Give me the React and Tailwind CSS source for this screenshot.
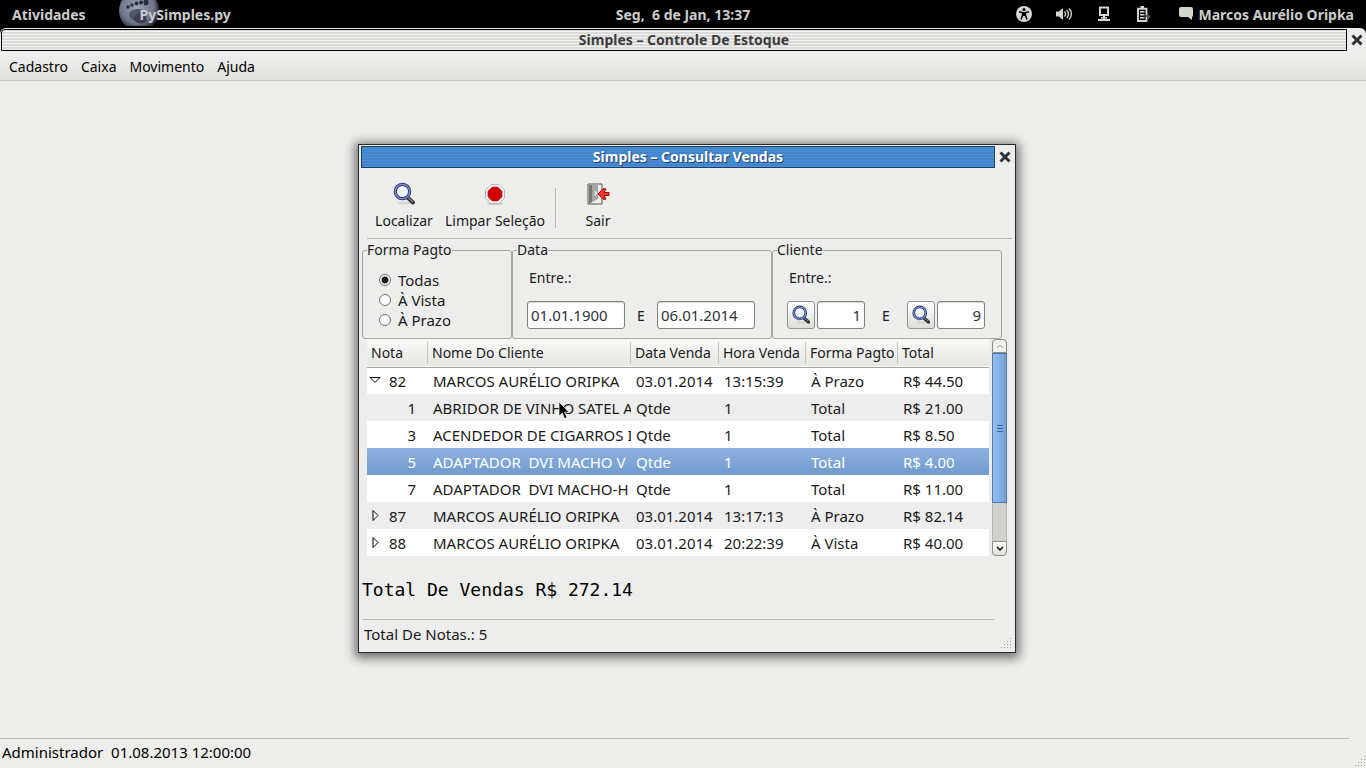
import { useState } from 'react';

const menus = ['Cadastro', 'Caixa', 'Movimento', 'Ajuda'];

const formas = ['Todas', 'À Vista', 'À Prazo'];

const rows = [
    { nota: '82', open: true, cells: ['MARCOS AURÉLIO ORIPKA', '03.01.2014', '13:15:39', 'À Prazo', 'R$ 44.50'] },
    { nota: '1', child: true, cells: ['ABRIDOR DE VINHO SATEL A', 'Qtde', '1', 'Total', 'R$ 21.00'] },
    { nota: '3', child: true, cells: ['ACENDEDOR DE CIGARROS I', 'Qtde', '1', 'Total', 'R$ 8.50'] },
    { nota: '5', child: true, cells: ['ADAPTADOR  DVI MACHO V', 'Qtde', '1', 'Total', 'R$ 4.00'] },
    { nota: '7', child: true, cells: ['ADAPTADOR  DVI MACHO-H', 'Qtde', '1', 'Total', 'R$ 11.00'] },
    { nota: '87', cells: ['MARCOS AURÉLIO ORIPKA', '03.01.2014', '13:17:13', 'À Prazo', 'R$ 82.14'] },
    { nota: '88', cells: ['MARCOS AURÉLIO ORIPKA', '03.01.2014', '20:22:39', 'À Vista', 'R$ 40.00'] },
];

const headers = ['Nota', 'Nome Do Cliente', 'Data Venda', 'Hora Venda', 'Forma Pagto', 'Total'];

const SearchIcon = ({ className }) => (
    <svg viewBox="0 0 24 24" className={className} aria-hidden="true">
        <ellipse cx="13" cy="21" rx="8" ry="1.500" fill="#d6d6d3" />
        <path d="M15.500 15.500l5.500 5" stroke="#2e3436" strokeWidth="4" strokeLinecap="round" />
        <path d="M16 15.500l4.500 4" stroke="#888a85" strokeWidth="1.200" strokeLinecap="round" />
        <circle cx="10.500" cy="9.500" r="7.200" fill="#eef2f8" stroke="#27397a" strokeWidth="3.200" />
        <circle cx="10.500" cy="9.500" r="7.200" fill="none" stroke="#7d93cf" strokeWidth="1.300" />
        <path d="M6 9a4.500 4.500 0 0 1 5-4.500c-1 2.500-2.500 4-5 4.500z" fill="#fff" />
    </svg>
);

const StopIcon = () => (
    <svg viewBox="0 0 24 24" className="size-6" aria-hidden="true">
        <ellipse cx="12" cy="21.500" rx="8" ry="1.500" fill="#c4c4c0" />
        <path d="M8 2.500h8l5.500 5.500v8L16 21.500H8L2.500 16V8z" fill="#fafafa" stroke="#b5b7b2" />
        <path d="M9.200 5.200h5.600l4 4v5.600l-4 4H9.200l-4-4V9.200z" fill="#d40000" stroke="#b00000" />
    </svg>
);

const ExitIcon = () => (
    <svg viewBox="0 0 24 24" className="size-6" aria-hidden="true">
        <path d="M2 2h14v20H2z" fill="#eeeeec" stroke="#555753" />
        <path d="M3 3h9v14l-9 5z" fill="#a3a5a1" />
        <path d="M3 3h3v17l-3 2z" fill="#747672" />
        <path d="M8.500 9l2 2.500-2 2" fill="none" stroke="#eeeeec" strokeWidth="1.300" />
        <path d="M23 10.500h-5l2-3.500-2.500-.5-5.500 5.500 5.500 5.500 2.500-.5-2-3.500h5z" fill="#ef3a29" stroke="#a40000" />
    </svg>
);

const CloseIcon = () => (
    <svg viewBox="0 0 12 12" className="size-3" aria-hidden="true">
        <path d="M1.500 1.500l9 9M10.500 1.500l-9 9" stroke="#2e3436" strokeWidth="3" />
    </svg>
);

const Grip = () => (
    <svg viewBox="0 0 12 12" className="size-3" fill="#a3a3a0" aria-hidden="true">
        <path d="M10 0h1v1h-1zM10 3h1v1h-1zM7 3h1v1H7zM10 6h1v1h-1zM7 6h1v1H7zM4 6h1v1H4zM10 9h1v1h-1zM7 9h1v1H7zM4 9h1v1H4zM1 9h1v1H1z" />
    </svg>
);

const Foot = () => (
    <svg viewBox="0 0 44 26" className="h-[26px] w-11" aria-hidden="true">
        <defs>
            <radialGradient id="ball" cx="45%" cy="40%" r="60%">
                <stop offset="0" stopColor="#9da3b8" />
                <stop offset="0.700" stopColor="#6c7288" />
                <stop offset="1" stopColor="#1c1e26" />
            </radialGradient>
        </defs>
        <circle cx="23" cy="11" r="20" fill="url(#ball)" />
        <ellipse cx="22" cy="15" rx="9" ry="6" fill="#505568" />
        <path d="M17 19c1-4 7-7 12-5l2 7c-4 4-10 3-14-2z" fill="#3c404f" />
        <g fill="#2b2e39">
            <circle cx="12" cy="7" r="1.800" />
            <circle cx="16" cy="5" r="1.800" />
            <circle cx="20.500" cy="3.500" r="1.900" />
            <circle cx="25" cy="2.500" r="2" />
            <ellipse cx="30" cy="2.500" rx="2.500" ry="3" />
        </g>
    </svg>
);

const TrayIcons = () => (
    <div className="flex items-center gap-6 pb-px text-[#d3d7cf]">
        <svg viewBox="0 0 16 16" className="size-4" aria-label="Acessibilidade">
            <circle cx="8" cy="8" r="8" fill="currentColor" />
            <circle cx="8" cy="3.500" r="1.500" fill="#000" />
            <path d="M3 5.800l3.500.8v3L5 13.500M13 5.800l-3.500.8v3L11 13.500" fill="none" stroke="#000" strokeWidth="1.500" />
            <path d="M6.300 6h3.400v4H6.300z" fill="#000" />
        </svg>
        <svg viewBox="0 0 16 16" className="size-4" aria-label="Volume">
            <path d="M0 5.500h3L7 2v12l-4-3.500H0z" fill="currentColor" />
            <path d="M8.500 5.500c1.300 1.500 1.300 3.500 0 5M10.700 4c2.200 2.500 2.200 5.500 0 8M13 2.500c3 3.500 3 7.500 0 11" fill="none" stroke="currentColor" strokeWidth="1.300" />
        </svg>
        <svg viewBox="0 0 16 16" className="size-4" aria-label="Rede">
            <path d="M4 1.500h8v7.500H4z" fill="none" stroke="currentColor" strokeWidth="2" />
            <path d="M7 9h2v4H7zM5 11h6v1.500H5zM2 13h12v2H2z" fill="currentColor" />
        </svg>
        <svg viewBox="0 0 16 16" className="size-4" aria-label="Bateria">
            <path d="M2 2.800h8.500V15H2zM4.500 1h3.500" fill="none" stroke="currentColor" strokeWidth="1.900" />
            <path d="M4 5h4.500v1.500H4zM4 8h4.500v1.500H4zM4 11h4.500v1.500H4z" fill="currentColor" />
            <path d="M12.500 6l-3.500 5h2.500l-1 4.500 4.500-6H12.500z" fill="#55575a" />
        </svg>
    </div>
);

const Field = ({ label, className, ...props }) => (
    <input
        type="text"
        aria-label={label}
        className={`h-7 rounded-[3px] border border-[#80827d] bg-white px-[3px] text-[15px] text-[#2e3436] shadow-[inset_0_1px_1px_#d5d5d2] outline-none ${className}`}
        {...props}
    />
);

const LookupButton = ({ label }) => (
    <button
        type="button"
        aria-label={label}
        className="flex size-7 items-center justify-center rounded-[3px] border border-[#90928d] bg-linear-to-b from-white to-[#dededb]"
    >
        <SearchIcon className="size-5" />
    </button>
);

const Group = ({ title, className, children }) => (
    <fieldset className={`h-[98px] rounded-[3px] border border-[#a6a6a2] ${className}`}>
        <legend className="ml-1 h-[18px] leading-[18px]">{title}</legend>
        {children}
    </fieldset>
);

const ToolButton = ({ label, className, children }) => (
    <button type="button" className={`flex flex-col items-center gap-[5px] ${className}`}>
        {children}
        <span className="leading-5">{label}</span>
    </button>
);

const Expander = ({ open }) => (
    <svg viewBox="0 0 12 12" className="size-3" aria-hidden="true">
        <path d={open ? 'M1 2.500h10L6 7.500z' : 'M4 .5v10l5-5z'} fill="#fff" stroke="#000" />
    </svg>
);

const Filters = () => {
    const [forma, setForma] = useState('Todas');

    return (
        <div className="flex pr-[13px] pl-[3px]">
            <Group title="Forma Pagto" className="w-[150px]">
                <div className="flex flex-col pt-[11px] pl-4 text-[15px]">
                    {formas.map((f) => (
                        <label key={f} className="flex h-5 items-center gap-[7px]">
                            <input
                                type="radio"
                                name="forma"
                                checked={forma === f}
                                onChange={() => setForma(f)}
                                className="size-3 appearance-none rounded-full border border-[#6e706b] bg-white checked:bg-[radial-gradient(circle,#1a1a1a_0_3px,#fff_4px)]"
                            />
                            {f}
                        </label>
                    ))}
                </div>
            </Group>
            <Group title="Data" className="w-[260px]">
                <div className="pt-[9px] pl-4 leading-5">Entre.:</div>
                <div className="flex items-center pt-[13px] pl-[14px]">
                    <Field label="Data inicial" defaultValue="01.01.1900" className="w-[98px]" />
                    <span className="w-8 text-center">E</span>
                    <Field label="Data final" defaultValue="06.01.2014" className="w-[98px]" />
                </div>
            </Group>
            <Group title="Cliente" className="flex-1">
                <div className="pt-[9px] pl-4 leading-5">Entre.:</div>
                <div className="flex items-center pt-[13px] pl-[14px]">
                    <LookupButton label="Localizar cliente inicial" />
                    <Field label="Cliente inicial" defaultValue="1" className="ml-[2px] w-12 text-right" />
                    <span className="w-[42px] text-center">E</span>
                    <LookupButton label="Localizar cliente final" />
                    <Field label="Cliente final" defaultValue="9" className="ml-[2px] w-12 text-right" />
                </div>
            </Group>
        </div>
    );
};

const SalesTable = () => {
    const [selected, setSelected] = useState('5');

    return (
        <table className="w-full flex-1 table-fixed border-collapse text-left">
            <colgroup>
                <col className="w-[61px]" />
                <col />
                <col className="w-[88px]" />
                <col className="w-[87px]" />
                <col className="w-[92px]" />
                <col className="w-[91px]" />
            </colgroup>
            <thead>
                <tr className="h-7 border-b border-[#a6a6a2] bg-linear-to-b from-[#f9f9f8] to-[#e6e6e4]">
                    {headers.map((h) => (
                        <th key={h} className="group p-0 font-normal">
                            <div className="flex h-[22px] items-center border-r border-[#c4c4c0] pl-1 whitespace-nowrap group-last:border-r-0">{h}</div>
                        </th>
                    ))}
                </tr>
            </thead>
            <tbody className="text-[15px] leading-[22px]">
                {rows.map((row) => (
                    <tr
                        key={row.nota}
                        onClick={() => setSelected(row.nota)}
                        className={
                            row.nota === selected
                                ? 'h-[27px] bg-linear-to-b from-[#8fb0df] to-[#709bcd] text-white'
                                : 'h-[27px] bg-white text-[#1a1a1a] even:bg-[#ededed]'
                        }
                    >
                        <td className="p-0">
                            {row.child ? (
                                <div className="pr-3 text-right">{row.nota}</div>
                            ) : (
                                <div className="flex items-center gap-2 pl-[2px]">
                                    <Expander open={row.open} />
                                    {row.nota}
                                </div>
                            )}
                        </td>
                        {row.cells.map((cell, i) => (
                            <td key={i} className="p-0 pl-[5px]">
                                <div className="overflow-hidden whitespace-pre">{cell}</div>
                            </td>
                        ))}
                    </tr>
                ))}
            </tbody>
        </table>
    );
};

const Scrollbar = () => (
    <div className="flex w-[15px] flex-col">
        <button type="button" aria-label="Rolar para cima" className="flex h-[14px] items-center justify-center rounded-t-[4px] border border-[#8a8c87] bg-[#f1f1f0]">
            <svg viewBox="0 0 8 6" className="h-[6px] w-2" aria-hidden="true">
                <path d="M1 5l3-3 3 3" fill="none" stroke="#a6a6a2" />
            </svg>
        </button>
        <div className="flex h-[150px] flex-col items-center justify-center gap-[2px] border border-[#4a78b5] bg-linear-to-r from-[#99bbec] to-[#729fd8]">
            <span className="h-px w-[6px] bg-[#3b639c]" />
            <span className="h-px w-[6px] bg-[#3b639c]" />
            <span className="h-px w-[6px] bg-[#3b639c]" />
        </div>
        <div className="flex-1 border-x border-[#b5b5b2] bg-[#d0d0ce]" />
        <button type="button" aria-label="Rolar para baixo" className="flex h-[15px] items-center justify-center rounded-b-[4px] border border-[#8a8c87] bg-linear-to-b from-white to-[#dededb]">
            <svg viewBox="0 0 8 6" className="h-[6px] w-2" aria-hidden="true">
                <path d="M1 1l3 3 3-3" fill="none" stroke="#000" strokeWidth="1.500" />
            </svg>
        </button>
    </div>
);

const SalesDialog = () => (
    <section className="absolute top-[63px] left-[358px] w-[658px] border border-[#2a2a2a] bg-[#ededeb] shadow-[0_2px_10px_3px_rgba(0,0,0,0.55)]">
        <div className="flex items-center pt-px pl-[2px]">
            <h2 className="h-[22px] flex-1 border border-[#1c3f6b] bg-[repeating-linear-gradient(0deg,#4a90d9_0_1px,#4484cb_1px_3px)] pl-5 text-center text-[14px] leading-5 font-bold text-white [text-shadow:1px_1px_1px_#1c3f6b]">
                Simples – Consultar Vendas
            </h2>
            <button type="button" aria-label="Fechar" className="flex w-5 justify-center">
                <CloseIcon />
            </button>
        </div>

        <div className="mr-[3px] ml-2 flex border-b border-[#b9b9b5] pt-[14px] pb-[7px]">
            <ToolButton label="Localizar" className="w-[74px]">
                <SearchIcon className="size-6" />
            </ToolButton>
            <ToolButton label="Limpar Seleção" className="w-[108px]">
                <StopIcon />
            </ToolButton>
            <div className="mt-[6px] mr-[6px] ml-[6px] h-10 border-r border-[#b9b9b5]" />
            <ToolButton label="Sair" className="w-[72px]">
                <ExitIcon />
            </ToolButton>
        </div>

        <div className="pt-[2px]">
            <Filters />
        </div>

        <div className="flex gap-[3px] pr-2 pl-2">
            <SalesTable />
            <Scrollbar />
        </div>

        <p className="pt-[22px] pb-[17px] pl-[3px] font-['DejaVu_Sans_Mono',monospace] text-[18px] leading-6 text-black">Total De Vendas R$ 272.14</p>

        <footer className="flex items-end justify-between pr-[3px] pb-[2px] pl-[3px]">
            <div className="mr-[6px] flex-1 border-t border-[#b9b9b5] pt-1 pb-[6px] pl-[2px] text-[15px] leading-5">Total De Notas.: 5</div>
            <Grip />
        </footer>
    </section>
);

const Pointer = () => (
    <svg viewBox="0 0 12 19" className="absolute top-[320px] left-[558px] h-[19px] w-3" aria-hidden="true">
        <path d="M1 1v14l3.300-3 2.200 5.500 2.500-1-2.300-5.300H11z" fill="#000" stroke="#fff" strokeWidth="0.700" />
    </svg>
);

const App = () => {
    return (
        <div className="flex min-h-screen flex-col bg-[#ededeb] font-['Noto_Sans','Open_Sans',sans-serif] text-[14px] text-[#1a1a1a]">
            <div className="bg-black">
                <header className="grid h-7 grid-cols-[1fr_auto_1fr] items-center pr-3 pl-3 text-[14px] font-bold text-[#ccc]">
                    <div className="flex h-7 items-center">
                        <button type="button">Atividades</button>
                        <button type="button" className="relative ml-[54px] flex h-7 items-center">
                            <span className="absolute top-0 -left-6">
                                <Foot />
                            </span>
                            <span className="relative">PySimples.py</span>
                        </button>
                    </div>
                    <div>Seg,&nbsp; 6 de Jan, 13:37</div>
                    <div className="flex items-center justify-end gap-[26px]">
                        <TrayIcons />
                        <button type="button" className="flex items-center gap-1">
                            <svg viewBox="0 0 16 14" className="h-[14px] w-4" aria-hidden="true">
                                <path d="M3 0h10a2 2 0 0 1 2 2v6a2 2 0 0 1-1 2v3l-4-3H3a2 2 0 0 1-2-2V2a2 2 0 0 1 2-2z" fill="#d3d7cf" />
                            </svg>
                            Marcos Aurélio Oripka
                        </button>
                    </div>
                </header>
                <div className="flex h-[23px] items-center rounded-t-[6px] bg-[#ededeb] pt-px pl-px">
                    <h1 className="h-[22px] flex-1 rounded-tl-[4px] border border-black bg-[repeating-linear-gradient(0deg,#f4f4f3_0_1px,#dadad8_1px_3px)] pl-5 text-center text-[14px] leading-5 font-bold text-[#3c3c3c]">
                        Simples – Controle De Estoque
                    </h1>
                    <button type="button" aria-label="Fechar janela" className="flex w-[19px] justify-center">
                        <CloseIcon />
                    </button>
                </div>
            </div>

            <nav className="flex h-[30px] items-center gap-[13px] border-b border-[#c4c4c0] bg-linear-to-b from-[#efefee] to-[#e2e2df] pt-[2px] pl-[9px] text-black">
                {menus.map((m) => (
                    <button key={m} type="button" className="leading-5">
                        {m}
                    </button>
                ))}
            </nav>

            <main className="relative min-h-[600px] flex-1">
                <SalesDialog />
                <Pointer />
            </main>

            <footer className="flex items-end">
                <div className="mr-[5px] flex-1 border-t border-[#b9b9b5] pt-[3px] pb-[6px] pl-[2px] text-[15px] leading-5 whitespace-pre text-black">Administrador  01.08.2013 12:00:00</div>
                <Grip />
            </footer>
        </div>
    );
};
export default App;
